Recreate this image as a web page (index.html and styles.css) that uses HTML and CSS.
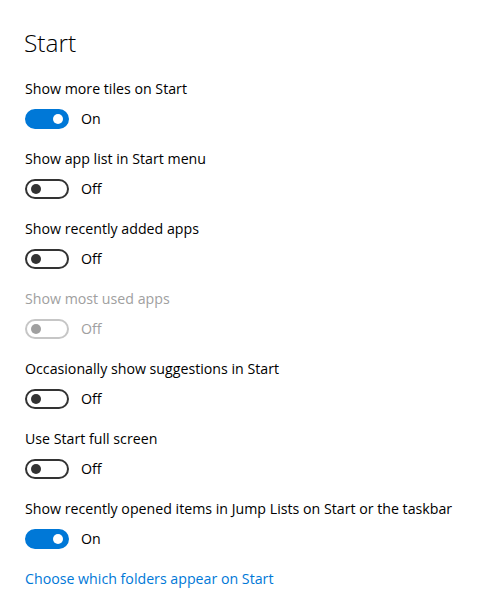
FILE: index.html
```html
<!DOCTYPE html>
<html>
<head>
<meta charset="utf-8">
<link rel="stylesheet" href="styles.css">
</head>
<body>
<main class="page">
  <h1 class="title">Start</h1>
  <div class="setting">
    <div class="label">Show more tiles on Start</div>
    <div class="toggle-row"><span class="toggle on"><span class="knob"></span></span><span class="state">On</span></div>
  </div>
  <div class="setting">
    <div class="label">Show app list in Start menu</div>
    <div class="toggle-row"><span class="toggle"><span class="knob"></span></span><span class="state">Off</span></div>
  </div>
  <div class="setting">
    <div class="label">Show recently added apps</div>
    <div class="toggle-row"><span class="toggle"><span class="knob"></span></span><span class="state">Off</span></div>
  </div>
  <div class="setting disabled">
    <div class="label">Show most used apps</div>
    <div class="toggle-row"><span class="toggle"><span class="knob"></span></span><span class="state">Off</span></div>
  </div>
  <div class="setting">
    <div class="label">Occasionally show suggestions in Start</div>
    <div class="toggle-row"><span class="toggle"><span class="knob"></span></span><span class="state">Off</span></div>
  </div>
  <div class="setting">
    <div class="label">Use Start full screen</div>
    <div class="toggle-row"><span class="toggle"><span class="knob"></span></span><span class="state">Off</span></div>
  </div>
  <div class="setting">
    <div class="label">Show recently opened items in Jump Lists on Start or the taskbar</div>
    <div class="toggle-row"><span class="toggle on"><span class="knob"></span></span><span class="state">On</span></div>
  </div>
  <a class="link" href="#">Choose which folders appear on Start</a>
</main>
</body>
</html>
```

FILE: styles.css
```css
html, body {
  margin: 0;
  padding: 0;
  background: #fff;
}
body {
  font-family: "Open Sans", "Noto Sans", sans-serif;
  color: #000;
}
.page {
  padding: 27px 0 0 25px;
  display: flex;
  flex-direction: column;
  align-items: flex-start;
}
.title {
  margin: 0 0 20px -1px;
  font-size: 24.5px;
  font-weight: 300;
  line-height: 32px;
  height: 32px;
}
.setting {
  display: flex;
  flex-direction: column;
  gap: 10px;
  margin-bottom: 20px;
}
.label {
  font-size: 14.2px;
  line-height: 20px;
  height: 20px;
  white-space: nowrap;
}
.toggle-row {
  display: flex;
  align-items: center;
  gap: 12px;
  height: 20px;
}
.toggle {
  box-sizing: border-box;
  width: 44px;
  height: 20px;
  border: 2px solid #333;
  border-radius: 10px;
  display: flex;
  align-items: center;
  padding: 0 4px;
  background: #fff;
}
.knob {
  width: 10px;
  height: 10px;
  border-radius: 50%;
  background: #333;
}
.toggle.on {
  background: #0078d7;
  border-color: #0078d7;
  justify-content: flex-end;
}
.toggle.on .knob {
  background: #fff;
}
.state {
  font-size: 14.2px;
  line-height: 20px;
}
.disabled .label,
.disabled .state {
  color: #a0a0a0;
}
.disabled .toggle {
  border-color: #c6c6c6;
}
.disabled .knob {
  background: #a0a0a0;
}
.link {
  font-size: 14.2px;
  line-height: 20px;
  color: #0078d7;
  text-decoration: none;
}
```
